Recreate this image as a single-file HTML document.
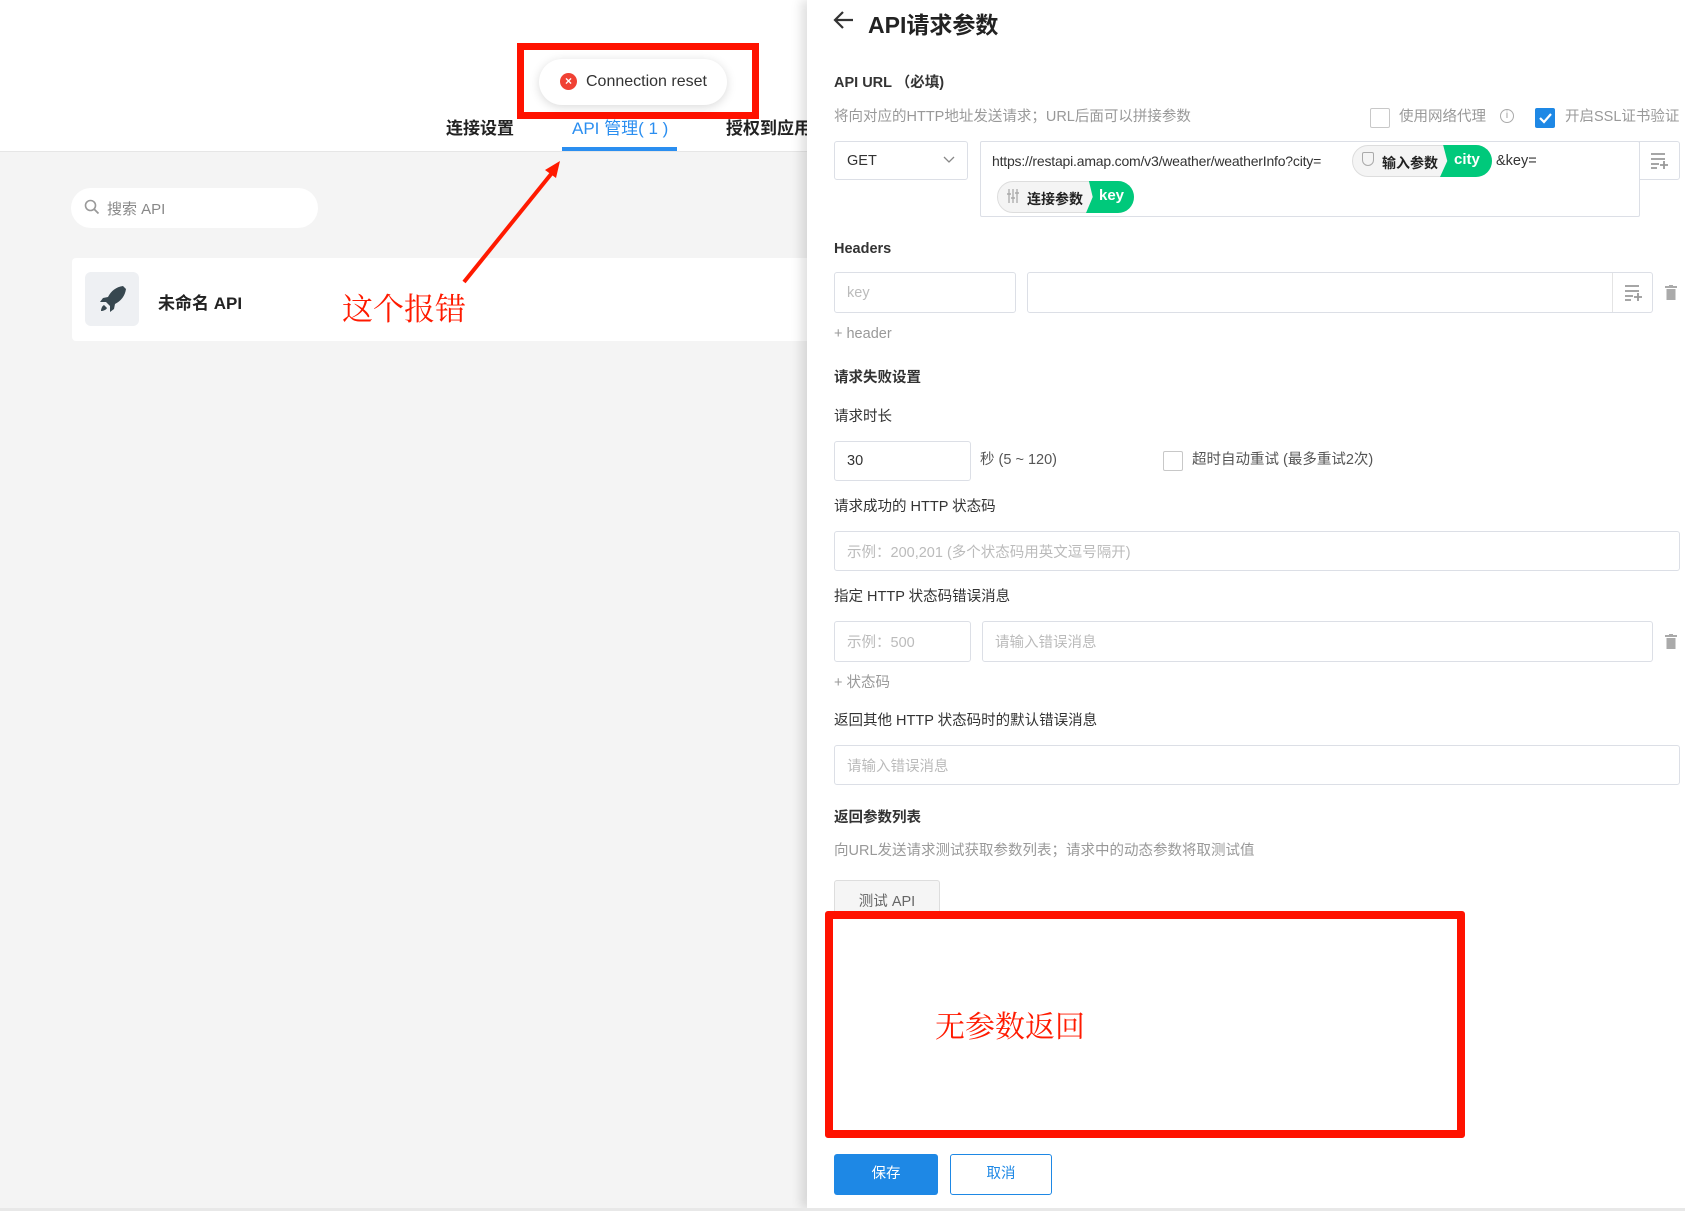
<!DOCTYPE html>
<html><head><meta charset="utf-8"><style>
*{box-sizing:border-box;margin:0;padding:0}
body{width:1685px;height:1211px;position:relative;overflow:hidden;background:#f4f4f4;font-family:"Liberation Sans","Noto Sans CJK SC",sans-serif;font-size:14.5px;color:#333}
.a{position:absolute;white-space:nowrap}
.inp{position:absolute;border:1px solid #dcdfe6;border-radius:3px;background:#fff;color:#bbb;font-size:14.5px;padding-left:12px;display:flex;align-items:center}
.lbl{position:absolute;font-size:14.5px;color:#333;white-space:nowrap;line-height:18px}
.b{font-weight:bold}
.hint{color:#999}
.cb{position:absolute;width:20px;height:20px;border:1px solid #c8c8c8;border-radius:2px;background:#fff}
</style></head><body>
<div class="a" style="left:0;top:0;width:810px;height:152px;background:#fff;border-bottom:1px solid #e6e6e6"></div>
<div class="a b" style="left:446px;top:114px;font-size:17px;color:#222">连接设置</div>
<div class="a" style="left:572px;top:114px;font-size:17px;color:#2a8ef0">API 管理( 1 )</div>
<div class="a" style="left:562px;top:147px;width:115px;height:4px;background:#2a8ef0"></div>
<div class="a b" style="left:726px;top:114px;font-size:17px;color:#222">授权到应用</div>
<div class="a" style="left:517px;top:43px;width:242px;height:76px;border:7px solid #ff1200;background:#fff"></div>
<div class="a" style="left:539px;top:59px;width:188px;height:46px;border-radius:23px;background:#fff;box-shadow:0 2px 10px rgba(0,0,0,.15)"></div>
<div class="a" style="left:560px;top:73px;width:17px;height:17px;border-radius:50%;background:#f04134;color:#fff;font-size:12px;line-height:17px;text-align:center;font-weight:bold">×</div>
<div class="a" style="left:586px;top:73px;font-size:16px;color:#333">Connection reset</div>
<div class="a" style="left:71px;top:188px;width:247px;height:40px;border-radius:20px;background:#fff"></div>
<svg class="a" style="left:84px;top:199px" width="16" height="16" viewBox="0 0 16 16"><circle cx="6.5" cy="6.5" r="5" fill="none" stroke="#999" stroke-width="1.6"/><path d="M10 10l4.5 4.5" stroke="#999" stroke-width="1.8"/></svg>
<div class="a" style="left:107px;top:198px;font-size:15px;color:#888">搜索 API</div>
<div class="a" style="left:72px;top:258px;width:740px;height:83px;background:#fff;border-radius:4px"></div>
<div class="a" style="left:85px;top:272px;width:54px;height:54px;background:#eef0f3;border-radius:6px"></div>
<svg class="a" style="left:96px;top:283px" width="32" height="32" viewBox="0 0 32 32"><path d="M27 3c-7 1-12 5-15 11l-5 1-3 4 6 0 4 4 0 6 4-3 1-5c6-3 10-8 11-15z" fill="#37474f"/><path d="M8 22c-2 1-3 4-3 6 2 0 5-1 6-3z" fill="#37474f"/></svg>
<div class="a b" style="left:158px;top:289px;font-size:17px;color:#222">未命名 API</div>
<div class="a" style="left:342px;top:284px;font-size:31px;color:#ff1a00;font-family:'Noto Serif CJK SC',serif">这个报错</div>
<svg class="a" style="left:0;top:0" width="810" height="360"><path d="M464 282 L556 168" stroke="#ff1a00" stroke-width="4"/><path d="M560 161 L545 170 L556 178Z" fill="#ff1a00"/></svg>

<div class="a" style="left:807px;top:0;width:878px;height:1208px;background:#fff;box-shadow:-6px 0 10px rgba(0,0,0,.12)"></div>
<div class="a" style="left:0;top:1208px;width:1685px;height:3px;background:#e8e8e8"></div>
<svg class="a" style="left:832px;top:8px" width="24" height="24" viewBox="0 0 24 24"><path d="M21 12H4M11 4l-8 8 8 8" fill="none" stroke="#333" stroke-width="2.2"/></svg>
<div class="a b" style="left:868px;top:6px;font-size:23px;color:#222">API请求参数</div>

<div class="lbl b" style="left:834px;top:74px">API URL （必填)</div>
<div class="lbl hint" style="left:834px;top:108px">将向对应的HTTP地址发送请求；URL后面可以拼接参数</div>
<div class="cb" style="left:1370px;top:108px"></div>
<div class="lbl hint" style="left:1399px;top:108px">使用网络代理</div>
<div class="a" style="left:1500px;top:109px;width:14px;height:14px;border:1px solid #aaa;border-radius:50%;font-size:10px;color:#999;text-align:center;line-height:12px">i</div>
<div class="a" style="left:1535px;top:108px;width:20px;height:20px;background:#1e88e5;border-radius:2px"></div>
<svg class="a" style="left:1535px;top:108px" width="20" height="20"><path d="M5 10l4 4 7-8" stroke="#fff" stroke-width="2.2" fill="none"/></svg>
<div class="lbl hint" style="left:1565px;top:108px">开启SSL证书验证</div>

<div class="inp" style="left:834px;top:141px;width:134px;height:39px;color:#333">GET</div>
<svg class="a" style="left:943px;top:155px" width="12" height="10"><path d="M1 2l5 5 5-5" stroke="#888" fill="none" stroke-width="1.3"/></svg>
<div class="a" style="left:980px;top:141px;width:660px;height:76px;border:1px solid #dcdfe6;border-radius:2px"></div>
<div class="a" style="left:1639px;top:141px;width:41px;height:39px;border:1px solid #dcdfe6;border-radius:0 3px 3px 0;background:#fff"></div>
<svg class="a" style="left:1650px;top:152px" width="19" height="17"><path d="M1 2h14M1 7h14M1 12h8M1 16h6M14 9v8M10 13h8" stroke="#999" stroke-width="1.8"/></svg>
<div class="lbl" style="left:992px;top:152px;font-size:14px;letter-spacing:-0.2px">https://restapi.amap.com/v3/weather/weatherInfo?city=</div>
<div class="a" style="left:1352px;top:145px;width:140px;height:32px;border-radius:16px;border:1px solid #ddd;background:#f4f4f4"></div>
<div class="a" style="left:1440px;top:145px;width:52px;height:32px;background:#00c97b;border-radius:0 16px 16px 0;clip-path:polygon(6% 0,100% 0,100% 100%,0 100%,14% 50%)"></div>
<div class="a" style="left:1362px;top:152px;width:12px;height:14px;border:1px solid #aaa;border-radius:2px 2px 6px 6px"></div>
<div class="a b" style="left:1382px;top:153px;font-size:14px;color:#222">输入参数</div>
<div class="a b" style="left:1454px;top:151px;font-size:15px;color:#fff">city</div>
<div class="lbl" style="left:1496px;top:152px">&amp;key=</div>
<div class="a" style="left:997px;top:181px;width:137px;height:32px;border-radius:16px;border:1px solid #ddd;background:#f4f4f4"></div>
<div class="a" style="left:1086px;top:181px;width:48px;height:32px;background:#00c97b;border-radius:0 16px 16px 0;clip-path:polygon(6% 0,100% 0,100% 100%,0 100%,14% 50%)"></div>
<svg class="a" style="left:1007px;top:189px" width="12" height="14"><path d="M2 0v14M6 0v14M10 0v14" stroke="#aaa" stroke-width="1.3"/><path d="M0 5h4M4 9h4M8 4h4" stroke="#aaa" stroke-width="1.6"/></svg>
<div class="a b" style="left:1027px;top:189px;font-size:14px;color:#222">连接参数</div>
<div class="a b" style="left:1099px;top:187px;font-size:15px;color:#fff">key</div>

<div class="lbl b" style="left:834px;top:240px">Headers</div>
<div class="inp" style="left:834px;top:272px;width:182px;height:41px">key</div>
<div class="inp" style="left:1027px;top:272px;width:626px;height:41px"></div>
<div class="a" style="left:1612px;top:273px;width:1px;height:39px;background:#e4e4e4"></div>
<svg class="a" style="left:1624px;top:284px" width="19" height="17"><path d="M1 2h14M1 7h14M1 12h8M1 16h6M14 9v8M10 13h8" stroke="#999" stroke-width="1.8"/></svg>
<svg class="a" style="left:1665px;top:285px" width="12" height="15"><path d="M0 2h12M4 0h4" stroke="#aaa" stroke-width="2"/><rect x="1.5" y="4" width="9" height="11" fill="#aaa"/></svg>
<div class="lbl hint" style="left:834px;top:325px">+ header</div>

<div class="lbl b" style="left:834px;top:369px">请求失败设置</div>
<div class="lbl" style="left:834px;top:408px">请求时长</div>
<div class="inp" style="left:834px;top:441px;width:137px;height:40px;color:#333">30</div>
<div class="lbl" style="left:980px;top:451px;color:#555">秒 (5 ~ 120)</div>
<div class="cb" style="left:1163px;top:451px"></div>
<div class="lbl" style="left:1192px;top:451px;color:#555">超时自动重试 (最多重试2次)</div>
<div class="lbl" style="left:834px;top:498px">请求成功的 HTTP 状态码</div>
<div class="inp" style="left:834px;top:531px;width:846px;height:40px">示例：200,201 (多个状态码用英文逗号隔开)</div>
<div class="lbl" style="left:834px;top:588px">指定 HTTP 状态码错误消息</div>
<div class="inp" style="left:834px;top:621px;width:137px;height:41px">示例：500</div>
<div class="inp" style="left:982px;top:621px;width:671px;height:41px">请输入错误消息</div>
<svg class="a" style="left:1665px;top:634px" width="12" height="15"><path d="M0 2h12M4 0h4" stroke="#aaa" stroke-width="2"/><rect x="1.5" y="4" width="9" height="11" fill="#aaa"/></svg>
<div class="lbl hint" style="left:834px;top:674px">+ 状态码</div>
<div class="lbl" style="left:834px;top:712px">返回其他 HTTP 状态码时的默认错误消息</div>
<div class="inp" style="left:834px;top:745px;width:846px;height:40px">请输入错误消息</div>
<div class="lbl b" style="left:834px;top:809px">返回参数列表</div>
<div class="lbl hint" style="left:834px;top:842px">向URL发送请求测试获取参数列表；请求中的动态参数将取测试值</div>
<div class="a" style="left:834px;top:880px;width:106px;height:36px;border:1px solid #ddd;border-radius:3px;background:#f5f5f5;color:#666;text-align:center;padding-top:9px">测试 API</div>
<div class="a" style="left:825px;top:911px;width:640px;height:227px;border:8px solid #ff1200;border-radius:3px;background:#fff"></div>
<div class="a" style="left:935px;top:1002px;font-size:30px;color:#ff1a00;font-family:'Noto Serif CJK SC',serif">无参数返回</div>
<div class="a" style="left:834px;top:1154px;width:104px;height:41px;background:#1e88e5;border-radius:3px;color:#fff;text-align:center;line-height:41px">保存</div>
<div class="a" style="left:950px;top:1154px;width:102px;height:41px;border:1px solid #1e88e5;border-radius:3px;color:#1e88e5;text-align:center;line-height:39px">取消</div>
</body></html>
